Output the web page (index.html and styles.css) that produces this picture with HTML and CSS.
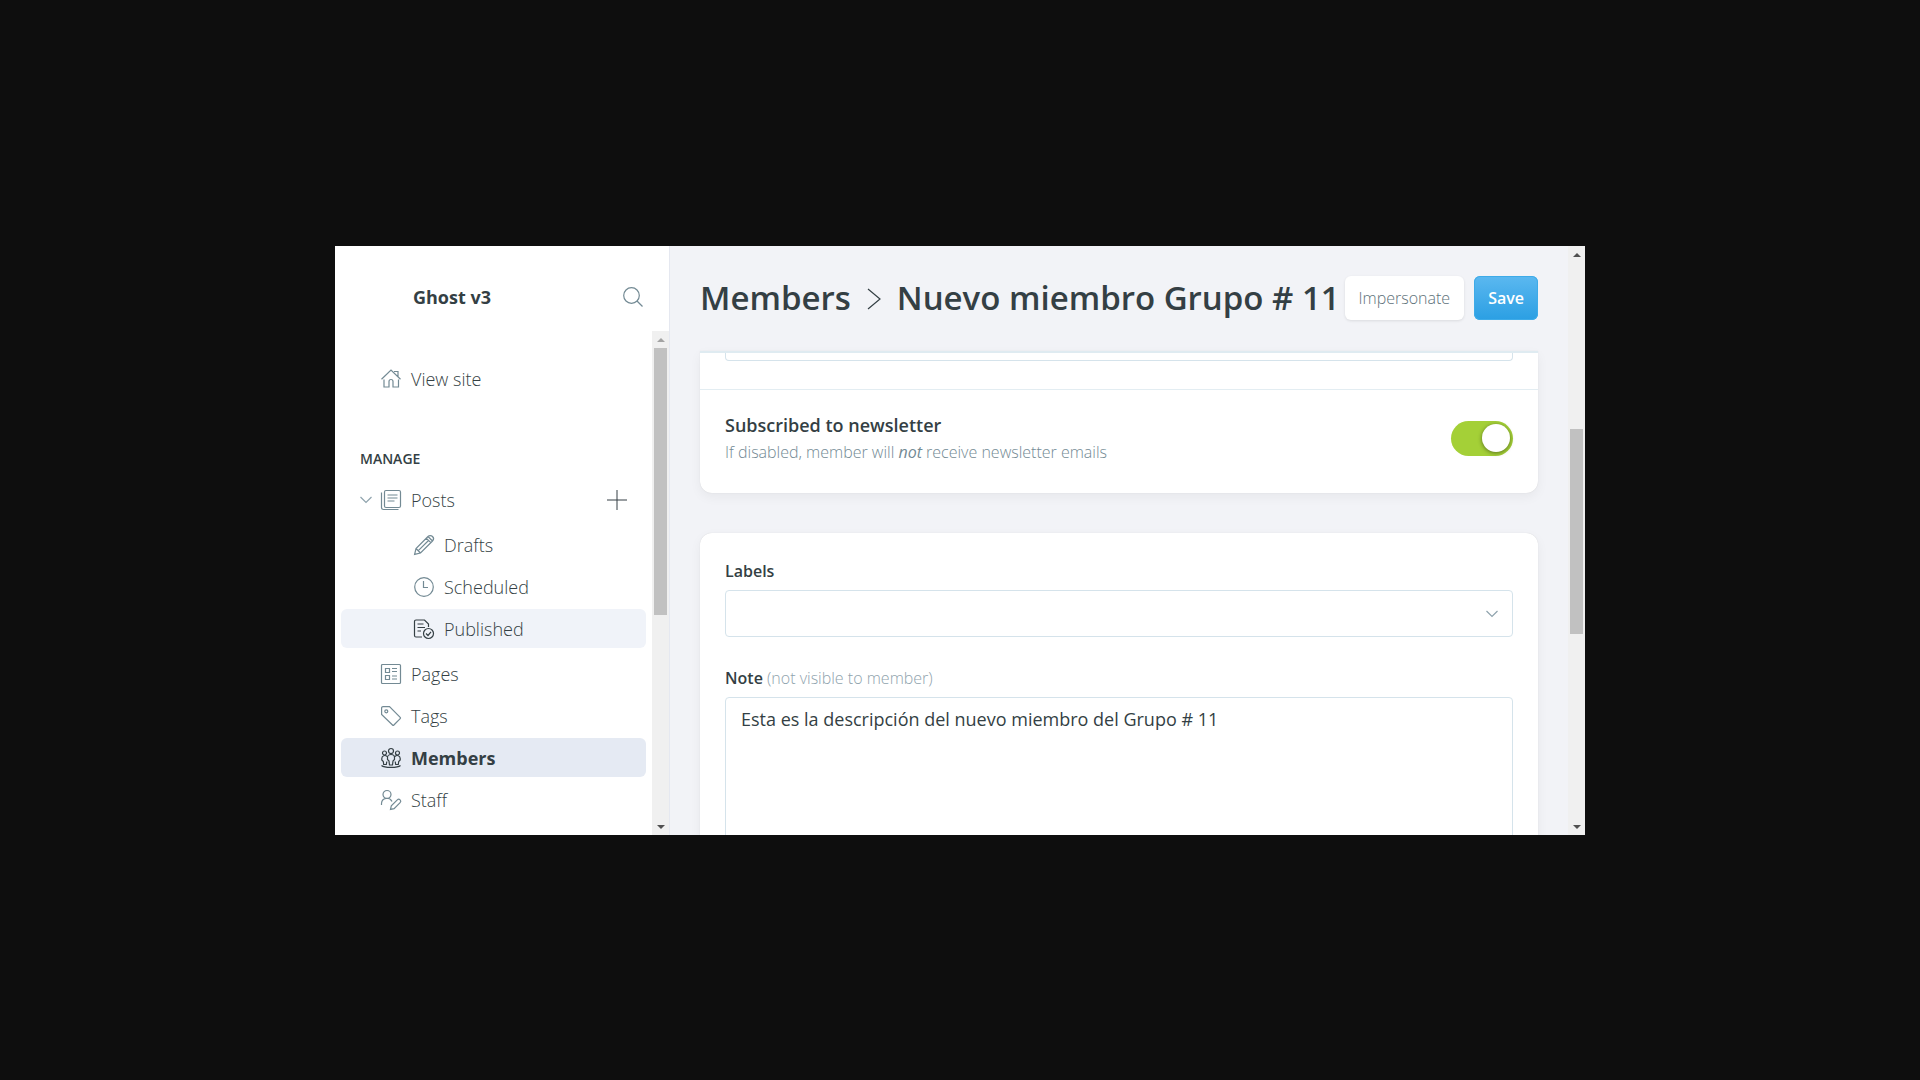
FILE: index.html
```html
<!DOCTYPE html>
<html lang="en">
<head>
<meta charset="utf-8">
<title>Members - Ghost v3</title>
<link rel="stylesheet" href="styles.css">
</head>
<body>
<div class="app">
  <aside class="sidebar">
    <header class="brand">
      <span class="brand-name">Ghost v3</span>
      <button class="icon-button" aria-label="Search">
        <svg class="icon" viewBox="0 0 20 20"><circle cx="8.500" cy="8.500" r="7.800"/><path d="M14 14l5.500 5.500"/></svg>
      </button>
    </header>
    <div class="sidebar-body">
      <nav class="nav">
        <a class="item view-site" href="#"><svg class="icon" viewBox="0 0 20 20"><path d="M.5 10.200 10 1l9.500 9.200M13 2.500h4v5M3 10.500V18h5v-5.500a2 2 0 0 1 4 0V18h5.500v-7.500"/></svg>View site</a>
        <h2 class="nav-title">Manage</h2>
        <div class="item posts">
          <svg class="chevron" viewBox="0 0 12 8"><path d="M.5 1 6 6.500 11.500 1"/></svg>
          <a class="posts-link" href="#"><svg class="icon" viewBox="0 0 20 20"><rect x="3.500" y=".5" width="16" height="17" rx="1.500"/><path d="M.5 2.500v15a2 2 0 0 0 2 2h15M6.500 5h10M6.500 8h10M6.500 11h7"/></svg>Posts</a>
          <button class="icon-button add" aria-label="New post"><svg class="icon" viewBox="0 0 20 20"><path d="M10 0v20M0 10h20"/></svg></button>
        </div>
        <div class="group sub">
          <a class="item" href="#"><svg class="icon" viewBox="0 0 20 20"><path d="M.6 19.400 2 13.500 14 1.500a2.600 2.600 0 0 1 4.500 4.500L6.500 18zM2 13.500 6.500 18M12.300 3.200l4.500 4.500M4.300 15.700 14.500 5.500M14 1.500l4.500 4.500"/></svg>Drafts</a>
          <a class="item" href="#"><svg class="icon" viewBox="0 0 20 20"><circle cx="10" cy="10" r="9.300"/><path d="M9.500 4v6.500h4.500"/></svg>Scheduled</a>
          <a class="item hovered" href="#"><svg class="icon dark" viewBox="0 0 20 20"><path d="M8 18H2a1.500 1.500 0 0 1-1.500-1.500v-14A1.500 1.500 0 0 1 2 1h8.500L14.500 5v3M3.500 5h6M3.500 8.500h7.500M3.500 12H7"/><circle cx="14.500" cy="14.500" r="5"/><path d="m12 14.500 2 2 3-3.700"/></svg>Published</a>
        </div>
        <div class="group">
          <a class="item" href="#"><svg class="icon" viewBox="0 0 20 20"><rect x=".5" y=".5" width="19" height="19" rx="1"/><path d="M4.500 4.500h4v4h-4zM4.500 11.500h4v4h-4zM11 4.500h5M11 7.500h5M11 12h5M11 15h5"/></svg>Pages</a>
          <a class="item" href="#"><svg class="icon" viewBox="0 0 20 20"><path d="M.6 2A1.400 1.400 0 0 1 2 .6h6.500L19.200 11.300a1 1 0 0 1 0 1.400l-6.300 6.300a1 1 0 0 1-1.400 0L.6 8.500z"/><circle cx="5.300" cy="5.300" r="1.500"/></svg>Tags</a>
          <a class="item current" href="#" aria-current="page"><svg class="icon dark" viewBox="0 0 20 20"><circle cx="10" cy="3" r="2.500"/><circle cx="3.500" cy="5" r="2"/><circle cx="16.500" cy="5" r="2"/><path d="M8.500 17l-.5-4-1.500-1.500V9.500a3.500 3 0 0 1 7 0v2L12 13l-.5 4zM6 8.500a3 3 0 0 0-5.200 2V12l1.500 1.500.4 3h2.600l.5-3M14 8.500a3 3 0 0 1 5.200 2V12l-1.500 1.500-.4 3h-2.600l-.5-3M.5 17.500c3 2.500 16 2.500 19 0"/></svg>Members</a>
          <a class="item" href="#"><svg class="icon" viewBox="0 0 20 20"><circle cx="6" cy="4.500" r="4"/><path d="M.5 15v-1.500a5.500 5.500 0 0 1 10.500-2M9.500 19.400l.8-3.600 6-6a1.900 1.900 0 0 1 2.800 2.800l-6 6z"/></svg>Staff</a>
        </div>
      </nav>
      <div class="scrollbar side-scroll" aria-hidden="true">
        <span class="arrow up faint"></span>
        <span class="track"><span class="thumb"></span><span class="after"></span></span>
        <span class="arrow down"></span>
      </div>
    </div>
  </aside>
  <main class="main">
    <div class="content">
      <header class="page-header">
        <h1 class="page-title"><a href="#">Members</a><svg class="separator" viewBox="0 0 14 22"><path d="M1 1 13 11 1 21"/></svg>Nuevo miembro Grupo # 11</h1>
        <div class="actions">
          <button class="button">Impersonate</button>
          <button class="button primary">Save</button>
        </div>
      </header>
      <section class="card details">
        <div class="details-top"><input class="field clipped" type="text" aria-label="Email"></div>
        <div class="newsletter">
          <label class="newsletter-text" for="newsletter">
            <span class="setting-title">Subscribed to newsletter</span>
            <span class="setting-help">If disabled, member will <em>not</em> receive newsletter emails</span>
          </label>
          <input class="toggle" type="checkbox" id="newsletter" checked>
        </div>
      </section>
      <section class="card extra">
        <label class="label" for="labels">Labels</label>
        <div class="select-wrap">
          <select class="field select" id="labels"><option></option></select>
          <svg class="chevron select-chevron" viewBox="0 0 12 8"><path d="M.5 1 6 6.500 11.500 1"/></svg>
        </div>
        <label class="label" for="note">Note <span class="label-hint">(not visible to member)</span></label>
        <textarea class="field note" id="note">Esta es la descripción del nuevo miembro del Grupo # 11</textarea>
      </section>
    </div>
    <div class="scrollbar main-scroll" aria-hidden="true">
      <span class="arrow up"></span>
      <span class="track"><span class="before"></span><span class="thumb"></span><span class="after"></span></span>
      <span class="arrow down"></span>
    </div>
  </main>
</div>
</body>
</html>
```
FILE: styles.css
```css
* { box-sizing: border-box; }

body {
  margin: 0;
  min-height: 100vh;
  padding-top: 1px;
  display: flex;
  align-items: center;
  justify-content: center;
  background: #0e0e0e;
  color: #343f44;
  font: 16px/24px "Open Sans", "Noto Sans", sans-serif;
}
a { color: inherit; text-decoration: none; }
button, input, select, textarea { font: inherit; color: inherit; }
h1, h2 { margin: 0; }

.app {
  display: flex;
  width: 100%;
  max-width: 1250px;
  height: 589px;
  max-height: 100vh;
  overflow: hidden;
  background: #f2f3f7;
}

/* Sidebar */
.sidebar {
  display: flex;
  flex-direction: column;
  flex: 0 0 335px;
  background: #fff;
  border-right: 1px solid #e5e8f0;
}
.brand {
  display: flex;
  align-items: center;
  justify-content: space-between;
  flex: 0 0 85px;
  padding: 16px 26px 0 78px;
}
.brand-name { font-size: 18px; font-weight: 700; }
.icon-button {
  display: flex;
  padding: 0;
  border: 0;
  background: none;
}
.icon, .chevron, .separator {
  flex: none;
  fill: none;
  stroke: #738a94;
  stroke-width: 1.2;
  overflow: visible;
}
.icon { width: 20px; height: 20px; }
.icon.dark { stroke: #343f44; }
.chevron { width: 12px; height: 8px; stroke: #8fa3ad; }

.sidebar-body { display: flex; flex: 1; min-height: 0; }
.nav {
  display: flex;
  flex-direction: column;
  flex: 1;
  padding: 28px 6px 0;
  overflow: hidden;
}
.item {
  display: flex;
  align-items: center;
  gap: 10px;
  flex: none;
  height: 39px;
  padding-left: 40px;
  border-radius: 6px;
  font-size: 18px;
  font-weight: 300;
}
.nav-title {
  margin: 49px 0 9px 19px;
  font-size: 14px;
  font-weight: 600;
  line-height: 24px;
  text-transform: uppercase;
}
.posts { padding: 0 19px; gap: 9px; }
.posts-link { display: flex; flex: 1; align-items: center; gap: 10px; }
.add .icon { stroke: #343f44; stroke-width: 1; }
.group { display: flex; flex-direction: column; gap: 3px; }
.sub { margin: 6px 0; }
.sub .item { padding-left: 73px; }
.hovered { background: #f0f3f9; }
.current { background: #e5eaf3; font-weight: 700; }

/* Scrollbars */
.scrollbar {
  display: flex;
  flex-direction: column;
  flex: 0 0 17px;
  background: #f0f0f0;
}
.arrow { display: flex; align-items: center; justify-content: center; height: 17px; }
.arrow::before { content: ""; border: 4px solid transparent; }
.up::before { border-top: 0; border-bottom-color: #505050; }
.down::before { border-bottom: 0; border-top-color: #505050; }
.faint::before { border-bottom-color: #a3a3a3; }
.track { display: flex; flex: 1; flex-direction: column; padding: 0 2px; }
.thumb { background: #c1c1c1; }
.side-scroll .thumb { flex: 267; }
.side-scroll .after { flex: 203; }
.main-scroll .before { flex: 166; }
.main-scroll .thumb { flex: 205; }
.main-scroll .after { flex: 184; }

/* Member screen */
.main { display: flex; flex: 1; min-width: 0; }
.content { flex: 1; min-width: 0; padding: 0 30px; overflow: hidden; }
.page-header {
  display: flex;
  align-items: center;
  justify-content: space-between;
  height: 105px;
  padding-bottom: 1px;
}
.page-title {
  display: flex;
  align-items: center;
  font-size: 33px;
  font-weight: 600;
  line-height: 44px;
  white-space: nowrap;
}
.separator { width: 14px; height: 22px; margin: 2px 16px 0; stroke: #343f44; }
.actions { display: flex; gap: 10px; }
.button {
  height: 44px;
  padding: 0 14px;
  border: 0;
  border-radius: 6px;
  background: #fff;
  box-shadow: 0 1px 3px rgba(0, 0, 0, .1);
  color: #5d7179;
  font-size: 16px;
  font-weight: 300;
}
.primary {
  background: linear-gradient(#5bb8f0, #2b9fe3);
  box-shadow: inset 0 0 0 1px #3eabe8;
  color: #fff;
  font-weight: 600;
}
.card {
  background: #fff;
  border-radius: 12px;
  box-shadow: 0 0 1px rgba(0, 0, 0, .15), 0 4px 12px rgba(0, 0, 0, .05);
}
.details { border-top: 2px solid #dfebf1; border-radius: 0 0 12px 12px; }
.details-top { height: 37px; padding: 0 25px; border-bottom: 1px solid #e3edf2; }
.field {
  display: block;
  width: 100%;
  border: 1px solid #d5e3eb;
  border-radius: 4px;
  background: #fff;
}
.clipped { height: 8px; padding: 0; border-top: 0; border-radius: 0 0 4px 4px; }
.newsletter {
  display: flex;
  align-items: center;
  justify-content: space-between;
  height: 103px;
  padding: 0 25px 7px;
}
.newsletter-text { display: flex; flex-direction: column; gap: 3px; }
.setting-title { font-size: 18px; font-weight: 600; }
.setting-help { color: #738a94; font-size: 16px; font-weight: 300; }
.setting-help em { font-weight: 400; }
.toggle {
  appearance: none;
  display: flex;
  justify-content: flex-end;
  width: 62px;
  height: 35px;
  margin: 0;
  padding: 3px;
  border-radius: 18px;
  background: #a4d037;
}
.toggle::before {
  content: "";
  width: 28px;
  height: 28px;
  border-radius: 50%;
  background: #fff;
  box-shadow: 0 1px 4px rgba(0, 0, 0, .45);
}
.extra { margin-top: 40px; padding: 26px 25px; }
.label { display: block; margin-bottom: 7px; font-size: 16px; font-weight: 600; }
.label-hint { color: #8fa3ad; font-weight: 300; }
.select-wrap { display: grid; align-items: center; margin-bottom: 29px; }
.select-wrap > * { grid-area: 1 / 1; }
.select { appearance: none; height: 47px; }
.select-chevron { justify-self: end; margin-right: 15px; pointer-events: none; }
.note { height: 190px; padding: 9px 15px; resize: none; font-size: 18px; overflow: hidden; }
```
